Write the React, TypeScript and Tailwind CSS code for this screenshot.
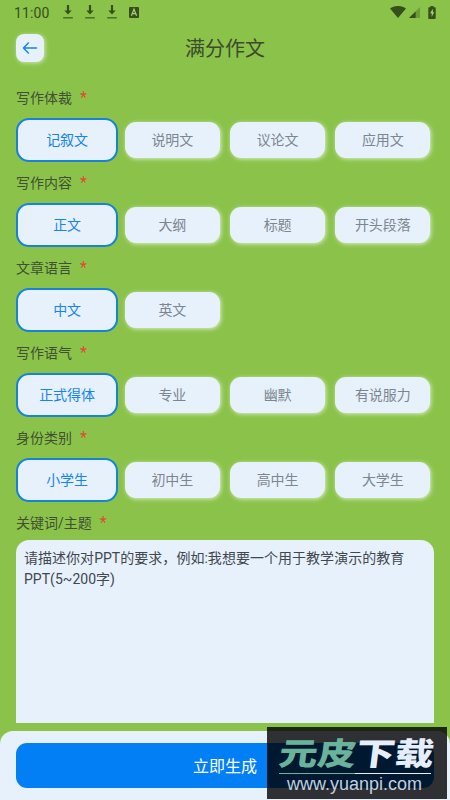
import React, { useState } from 'react';
import clsx from 'clsx';

interface OptionGroup {
  key: string;
  label: string;
  options: string[];
}

const groups: OptionGroup[] = [
  { key: 'genre', label: '写作体裁', options: ['记叙文', '说明文', '议论文', '应用文'] },
  { key: 'content', label: '写作内容', options: ['正文', '大纲', '标题', '开头段落'] },
  { key: 'language', label: '文章语言', options: ['中文', '英文'] },
  { key: 'tone', label: '写作语气', options: ['正式得体', '专业', '幽默', '有说服力'] },
  { key: 'identity', label: '身份类别', options: ['小学生', '初中生', '高中生', '大学生'] },
];

const DownloadIcon = () => (
  <svg width="10" height="14" viewBox="0 0 10 14" fill="currentColor">
    <path d="M3.9 0h2.2v5.4h2.6L5 9.6 1.3 5.4h2.6z" />
    <path d="M.2 12.3h9.6v1.1H.2z" />
  </svg>
);

const StatusBar = () => (
  <div className="flex h-6 items-center justify-between pl-[14px] pr-[14px] text-[#35501a]">
    <div className="flex items-center">
      <span className="w-[49px] pt-px text-[14px] leading-6 tracking-[0.1px]">11:00</span>
      <div className="flex gap-3">
        <DownloadIcon />
        <DownloadIcon />
        <DownloadIcon />
      </div>
      <svg className="ml-[12px]" width="10" height="11" viewBox="0 0 10 11">
        <rect width="10" height="11" rx="1" fill="currentColor" />
        <path d="M2.4 8.7 5 2.2l2.6 6.5M3.4 6.7h3.2" fill="none" stroke="#a8ce78" strokeWidth="1.2" />
      </svg>
    </div>
    <div className="flex items-center">
      <svg width="16" height="12" viewBox="0 0 16 12" fill="currentColor">
        <path d="M0 2.6C4.5-.9 11.5-.9 16 2.6L8 12z" />
      </svg>
      <svg className="ml-[3px]" width="11" height="11" viewBox="0 0 11 11" fill="currentColor">
        <path d="M11 0v11H0z" opacity=".35" />
        <path d="M6.6 4.4V11H0z" />
      </svg>
      <svg className="ml-[8px]" width="8" height="13" viewBox="0 0 8 13">
        <path d="M2.4 0h3.200v1.300H7q.7 0 .7.700v10.300q0 .7-.7.700H1q-.7 0-.7-.7V2q0-.7.7-.7h1.400z" fill="currentColor" />
        <path d="M4.9 2.800 2 7.200h1.700v3.500L6.200 6.200H4.900z" fill="#a8ce78" />
      </svg>
    </div>
  </div>
);

const FieldLabel = ({ text }: { text: string }) => (
  <div className="flex h-6 items-center pl-4 text-[14px] text-[#414f34]">
    <span>{text}</span>
    <span className="ml-2 text-[16px] text-[#e04a32]">*</span>
  </div>
);

const Watermark = () => (
  <div className="absolute right-[3px] bottom-px h-[72px] w-[180px] bg-black/80 pl-3 pt-[9px]">
    <div className="flex h-[36px] w-[156px] origin-left scale-x-[1.09] scale-y-[0.88] -skew-x-6 items-center text-[35.5px] leading-[36px] font-black whitespace-nowrap">
      <span className="text-[#69b39b]">元皮</span>
      <span className="text-[#e6eefb]">下载</span>
    </div>
    <div className="mt-px flex h-px w-[152px]">
      <span className="h-px w-1/2 bg-[#69b39b]" />
      <span className="h-px w-1/2 bg-[#e6eefb]" />
    </div>
    <div className="pl-[8px] font-['Liberation_Sans',sans-serif] text-[18px] leading-[20px] text-[#c3cfdd]">www.yuanpi.com</div>
  </div>
);

const App = () => {
  const [selected, setSelected] = useState<Record<string, string>>(
    Object.fromEntries(groups.map((group) => [group.key, group.options[0]]))
  );
  const [keyword, setKeyword] = useState('');

  return (
    <div className="relative flex h-[800px] w-[450px] flex-col overflow-hidden bg-[#8bc34a] font-[Roboto,'Noto_Sans_CJK_SC',sans-serif]">
      <StatusBar />

      <header className="grid h-[48px] grid-cols-[60px_1fr_60px] items-center">
        <button className="ml-4 flex size-[28px] items-center justify-center rounded-lg bg-[#e6f1fc] text-[#1683ee] shadow-[1px_1px_4px_rgba(255,255,255,0.6)]">
          <svg width="16" height="12" viewBox="0 0 16 12" fill="none" stroke="currentColor" strokeWidth="1.5" strokeLinecap="round" strokeLinejoin="round">
            <path d="M14.500 6H1.500M6.300 1 1.500 6l4.800 5" />
          </svg>
        </button>
        <h1 className="pt-[2px] text-center text-[20px] leading-[28px] text-[#3c4a2d]">满分作文</h1>
      </header>

      <main className="flex flex-col pt-[14px]">
        {groups.map((group) => (
          <section key={group.key} className="h-[85px]">
            <FieldLabel text={group.label} />
            <div className="mx-[14.5px] mt-[7px] grid h-[46px] grid-cols-4 place-items-center">
              {group.options.map((option) => {
                const active = selected[group.key] === option;
                return (
                  <button
                    key={option}
                    onClick={() => setSelected({ ...selected, [group.key]: option })}
                    className={clsx(
                      'bg-[#e6f1fc] text-[14px]',
                      active
                        ? 'h-[44px] w-[102px] rounded-[13px] border-2 border-[#1683d8] text-[#1683ee]'
                        : 'h-[36px] w-[95px] rounded-[11px] text-[#7d858e] shadow-[1px_1px_4px_rgba(255,255,255,0.7)]'
                    )}
                  >
                    {option}
                  </button>
                );
              })}
            </div>
          </section>
        ))}
        <FieldLabel text="关键词/主题" />
        <textarea
          value={keyword}
          onChange={(e) => setKeyword(e.target.value)}
          placeholder="请描述你对PPT的要求，例如:我想要一个用于教学演示的教育PPT(5~200字)"
          className="mx-4 mt-[5px] block h-[183px] resize-none rounded-t-[13px] bg-[#e6f1fc] px-2 py-[8px] text-[14px] leading-[21px] tracking-[0.03px] outline-none placeholder:text-[#42474d]"
        />
      </main>

      <footer className="mt-auto h-[69px] rounded-t-[13px] bg-[#e6f1fc] px-4 pt-3">
        <button className="h-[45px] w-full rounded-[11px] bg-[#037ff5] pt-[2px] text-[16px] text-white">立即生成</button>
      </footer>

      <Watermark />
    </div>
  );
};

export default App;
